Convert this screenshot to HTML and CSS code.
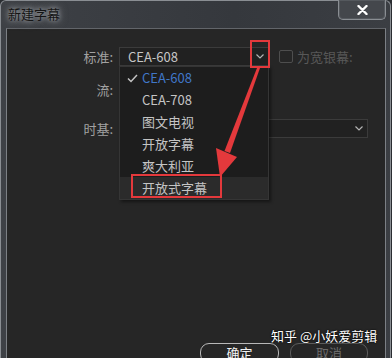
FILE: index.html
```html
<!DOCTYPE html>
<html lang="zh-CN">
<head>
    <meta charset="UTF-8">
    <meta name="viewport" content="width=device-width, initial-scale=1.0">
    <title>新建字幕</title>
    <link rel="stylesheet" href="styles.css">
</head>
<body>
    <div class="window">
        <div class="titlebar">
            <span class="title">新建字幕</span>
            <button class="close" type="button" aria-label="关闭">
                <svg width="11" height="10" viewBox="0 0 11 10"><path d="M1.5 1 L9.5 9 M9.5 1 L1.5 9" stroke="#ffffff" stroke-width="2.4" stroke-linecap="round"/></svg>
            </button>
        </div>

        <div class="content">
            <div class="form">
                <div class="row row-standard">
                    <span class="label">标准:</span>
                    <div class="select select-standard">
                        <span>CEA-608</span>
                        <svg class="chevron" width="8" height="5" viewBox="0 0 8 5"><path d="M0.5 0.5 L4 4 L7.5 0.5" fill="none" stroke="#b4b4b4" stroke-width="1.2"/></svg>
                        <ul class="menu">
                            <li class="checked">
                                <svg class="check" width="11" height="9" viewBox="0 0 11 9"><path d="M1 4.5 L4 7.5 L10 1" fill="none" stroke="#c4c4c4" stroke-width="1.5"/></svg>
                                CEA-608
                            </li>
                            <li>CEA-708</li>
                            <li>图文电视</li>
                            <li>开放字幕</li>
                            <li>爽大利亚</li>
                            <li class="hover">开放式字幕</li>
                        </ul>
                    </div>
                    <label class="widescreen">
                        <span class="checkbox"></span>
                        为宽银幕:
                    </label>
                </div>
                <div class="row row-stream">
                    <span class="label">流:</span>
                </div>
                <div class="row">
                    <span class="label">时基:</span>
                    <div class="select select-timebase">
                        <svg class="chevron" width="8" height="5" viewBox="0 0 8 5"><path d="M0.5 0.5 L4 4 L7.5 0.5" fill="none" stroke="#b4b4b4" stroke-width="1.2"/></svg>
                    </div>
                </div>
            </div>

            <div class="actions">
                <button class="btn btn-ok" type="button">确定</button>
                <button class="btn btn-cancel" type="button">取消</button>
            </div>
        </div>

        <!-- red markup drawn over the dialog -->
        <svg class="annotations" width="392" height="358" viewBox="0 0 392 358">
            <rect x="251" y="41" width="18" height="26" fill="none" stroke="#e4393c" stroke-width="2"/>
            <rect x="132" y="175" width="89" height="22" fill="none" stroke="#e4393c" stroke-width="2"/>
            <polygon points="257,68 260,68 230,153 224.5,151" fill="#e4393c"/>
            <polygon points="220,177 216,148 237,157" fill="#e4393c"/>
        </svg>

        <div class="watermark">知乎 @小妖爱剪辑</div>
    </div>
</body>
</html>
```

FILE: styles.css
```css
/* Global Styles */
* {
    box-sizing: border-box;
}

body {
    margin: 0;
    height: 358px;
    overflow: hidden;
    background: #2a2d31;
    font-family: "Noto Sans CJK SC", "Noto Sans", sans-serif;
    font-size: 13px;
}

.window {
    position: relative;
    width: 391px;
    height: 358px;
    background: linear-gradient(90deg, #3e4146, #35383d 60%, #3b3e43);
    border: 1px solid #8a8e93;
    border-bottom: none;
    border-radius: 6px 6px 0 0;
    padding: 0 4px 0 5px;
}

/* Title bar */
.titlebar {
    height: 27px;
    display: flex;
    justify-content: space-between;
    align-items: flex-start;
}

.title {
    padding: 5px 0 0 2px;
    line-height: 16px;
    color: #151515;
    text-shadow: 0 0 5px rgba(190, 194, 198, 0.9), 0 0 10px rgba(170, 174, 178, 0.7);
}

.close {
    width: 48px;
    height: 20px;
    margin-top: -1px;
    padding: 0;
    border: 1px solid #8a8e93;
    border-top: none;
    border-radius: 0 0 5px 5px;
    background: #44474c;
    box-shadow: inset 0 0 0 1px #55595e;
    display: flex;
    justify-content: center;
    align-items: center;
}

/* Dialog body */
.content {
    height: 340px;
    display: flex;
    flex-direction: column;
    background: #262626;
    border: 1px solid #7c8085;
    border-top-color: #62656a;
    padding: 18px 17px 4px 0;
}

.row {
    display: flex;
    align-items: center;
    height: 19px;
}

.row-standard {
    margin-bottom: 14px;
}

.row-stream {
    margin-bottom: 20px;
}

.label {
    width: 106px;
    margin-right: 6px;
    text-align: right;
    color: #a2a2a2;
    line-height: 19px;
}

.select {
    position: relative;
    height: 19px;
    display: flex;
    align-items: center;
    padding-left: 8px;
    background: #212121;
    border: 1px solid #3b3b3b;
    color: #c6c6c6;
    line-height: 17px;
}

.select-standard {
    width: 150px;
}

.select-timebase {
    width: 249px;
}

.chevron {
    margin-left: auto;
    margin-right: 4px;
}

/* Open dropdown list */
.menu {
    position: absolute;
    top: calc(100% + 1px);
    left: -1px;
    width: 150px;
    margin: 0;
    padding: 0;
    list-style: none;
    background: #1d1d1d;
    border: 1px solid #353535;
    box-shadow: 2px 2px 3px rgba(0, 0, 0, 0.45);
    z-index: 2;
}

.menu li {
    position: relative;
    height: 22px;
    line-height: 22px;
    padding-left: 22px;
    color: #c4c4c4;
}

.menu li.checked {
    color: #4077c8;
}

.menu li.hover {
    background: #2b2b2b;
}

.check {
    position: absolute;
    left: 7px;
    top: 7px;
}

.widescreen {
    display: flex;
    align-items: center;
    margin-left: 10px;
    color: #585858;
    line-height: 19px;
}

.checkbox {
    width: 14px;
    height: 13px;
    margin-right: 4px;
    border: 1px solid #4e4e4e;
    border-radius: 2px;
}

/* Buttons */
.actions {
    margin-top: auto;
    display: flex;
    justify-content: flex-end;
    gap: 11px;
}

.btn {
    height: 20px;
    padding: 0;
    background: #262626;
    border-radius: 9px;
    font-family: inherit;
    font-size: 13px;
    line-height: 18px;
}

.btn-ok {
    width: 79px;
    border: 1px solid #b8b8b8;
    color: #f2f2f2;
}

.btn-cancel {
    width: 78px;
    border: 1px solid #5c5c5c;
    color: #6a6a6a;
}

/* Overlays */
.annotations {
    position: absolute;
    top: -1px;
    left: -1px;
    pointer-events: none;
    z-index: 3;
}

.watermark {
    position: absolute;
    left: 270px;
    top: 327px;
    color: #ffffff;
    font-size: 13px;
    line-height: 16px;
    text-shadow: 0 0 2px #000000, 0 0 1px #000000;
    z-index: 4;
}
```
